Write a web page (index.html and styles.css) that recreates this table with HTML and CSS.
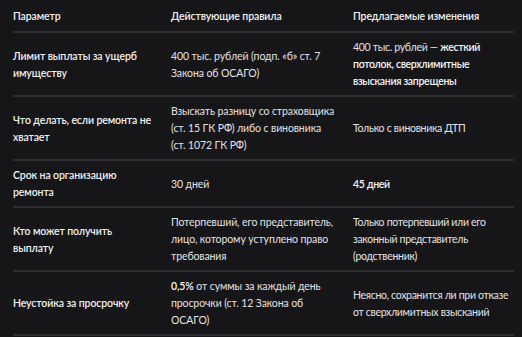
FILE: index.html
```html
<!DOCTYPE html>
<html lang="ru">
<head>
<meta charset="utf-8">
<link rel="stylesheet" href="styles.css">
</head>
<body>
<table class="cmp">
  <colgroup>
    <col class="c1"><col class="c2"><col class="c3">
  </colgroup>
  <thead>
    <tr><th>Параметр</th><th>Действующие правила</th><th>Предлагаемые изменения</th></tr>
  </thead>
  <tbody>
    <tr>
      <td class="param">Лимит выплаты за ущерб имуществу</td>
      <td>400 тыс. рублей (подп. «б» ст. 7 Закона об ОСАГО)</td>
      <td class="new">400 тыс. рублей — <b>жесткий потолок, сверхлимитные взыскания запрещены</b></td>
    </tr>
    <tr>
      <td class="param">Что делать, если ремонта не хватает</td>
      <td>Взыскать разницу со страховщика (ст. 15 ГК РФ) либо с виновника (ст. 1072 ГК РФ)</td>
      <td class="new">Только с виновника ДТП</td>
    </tr>
    <tr>
      <td class="param">Срок на организацию ремонта</td>
      <td>30 дней</td>
      <td class="new"><b>45 дней</b></td>
    </tr>
    <tr>
      <td class="param">Кто может получить выплату</td>
      <td>Потерпевший, его представитель, лицо, которому уступлено право требования</td>
      <td class="new">Только потерпевший или его законный представитель (родственник)</td>
    </tr>
    <tr>
      <td class="param">Неустойка за просрочку</td>
      <td><b>0,5%</b> от суммы за каждый день просрочки (ст. 12 Закона об ОСАГО)</td>
      <td class="new">Неясно, сохранится ли при отказе от сверхлимитных взысканий</td>
    </tr>
  </tbody>
</table>
</body>
</html>
```
FILE: styles.css
```css
html, body {
  margin: 0;
  background: #161618;
}
body {
  padding: 0 8px 0 13px;
  font-family: "Lato", "Open Sans", sans-serif;
  font-size: 10.5px;
  line-height: 17px;
  letter-spacing: -0.1px;
  color: #e2e2e4;
}
.cmp {
  width: 501px;
  border-collapse: collapse;
  table-layout: fixed;
}
.c1 { width: 158px; }
.c2 { width: 182px; }
.c3 { width: 161px; }
.cmp th {
  text-align: left;
  font-weight: 600;
  color: #f2f2f4;
  padding: 8px 4px 6px 0;
  border-bottom: 2px solid #2e2e31;
}
.cmp td {
  padding: 6px 16px 5px 0;
  vertical-align: middle;
  border-bottom: 2px solid #2e2e31;
}
.cmp td.param {
  font-weight: 600;
  color: #f2f2f4;
  padding-right: 18px;
}
.cmp td.new {
  padding-right: 0;
  letter-spacing: -0.3px;
}
.cmp b {
  font-weight: 600;
  color: #f6f6f8;
}
```
